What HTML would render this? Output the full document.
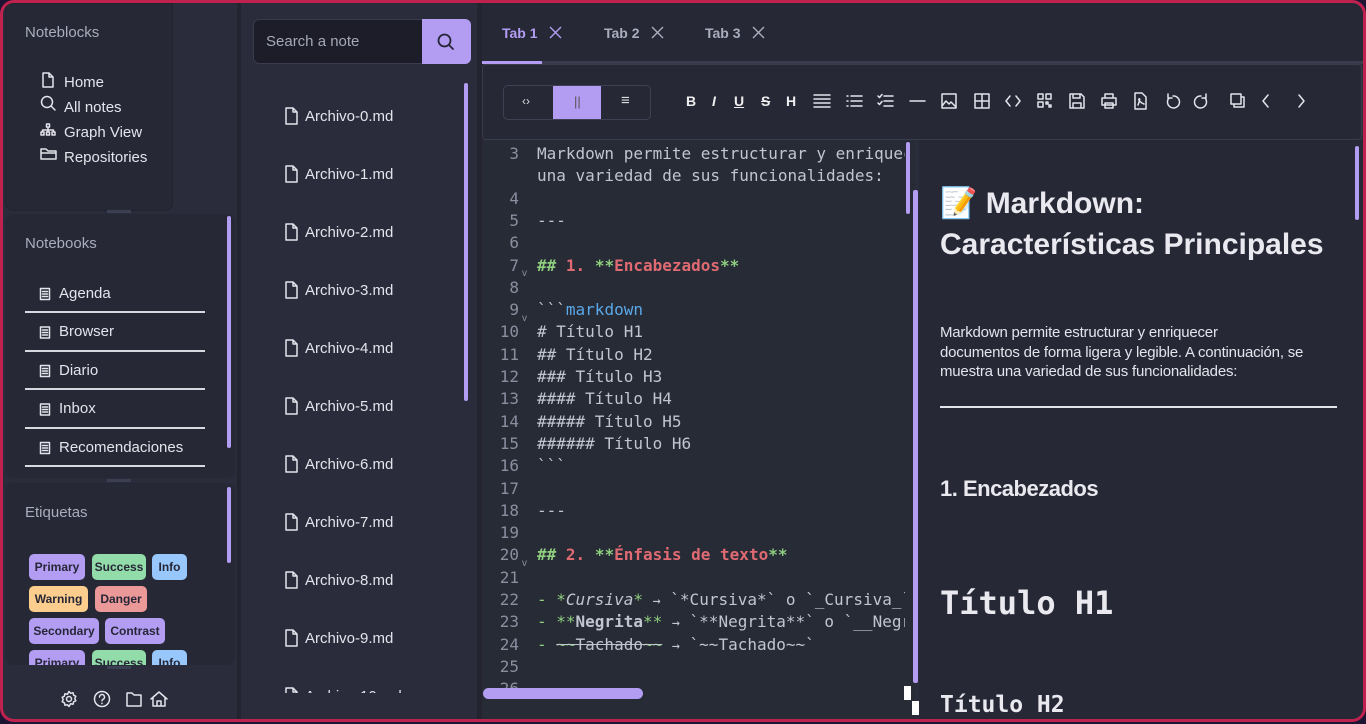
<!DOCTYPE html>
<html><head><meta charset="utf-8"><style>
*{box-sizing:border-box;margin:0;padding:0}
body{width:1366px;height:724px;background:#1c1432;overflow:hidden;font-family:"Liberation Sans",sans-serif;position:relative}
.a{position:absolute}
#win{left:0;top:0;width:1366px;height:722px;background:#2a2c3b;border:3px solid #c0224f;border-radius:14px;overflow:hidden}
.pan{background:#272836}
.t{color:#e4e4ec;font-size:15px;white-space:nowrap}
.hd{color:#a9adbd;font-size:15px}
.ic{stroke:#e4e4ec;fill:none;stroke-width:1.5;stroke-linecap:round;stroke-linejoin:round}
.tag{position:absolute;height:26px;border-radius:5px;font-size:12px;font-weight:bold;color:#262637;line-height:26px;text-align:center}
.code{font-family:"DejaVu Sans Mono","Liberation Mono",monospace;font-size:16px;color:#c1c5d0;white-space:pre;line-height:22.3px}
.ln{position:absolute;left:0;width:37px;text-align:right;color:#8a8fa0}
.cl{position:absolute;left:55px}
.g{color:#8fce7e}.r{color:#e06a72;font-weight:bold}.b{color:#5aa8e8}
.tb{position:absolute;top:90px;color:#eee;font-size:14px;font-weight:bold}
.tab{position:absolute;top:22px;font-size:14px;font-weight:bold}
</style></head><body>
<div id="win" class="a">
<!-- left sidebar -->
<div class="a" style="left:2px;top:0;width:230px;height:206px;background:#2a2c3b"></div>
<div class="a pan" style="left:2px;top:0;width:168px;height:208px;border-radius:0 0 8px 8px;border:1px solid #22232f"></div>
<div class="a" style="left:104px;top:207px;width:24px;height:3px;background:#3c3f52"></div>
<div class="a hd" style="left:22px;top:21px">Noteblocks</div>
<svg class="a" style="left:36px;top:68px" width="20" height="100" viewBox="0 0 20 100">
<path class="ic" d="M4 2h6l4 4v10H4z M10 2v4h4"/>
<circle class="ic" cx="8" cy="31" r="5.5"/><path class="ic" d="M12 35l4 4"/>
<path class="ic" d="M7.5 53h3v3h-3z M2 61h3v3H2z M7.5 61h3v3h-3z M13 61h3v3h-3z M9 56v5 M3.5 61v-2h11v2"/>
<path class="ic" d="M2 78h5l2 2h8v8H2z M2 82h15"/>
</svg>
<div class="a t" style="left:61px;top:71px">Home</div>
<div class="a t" style="left:61px;top:96px">All notes</div>
<div class="a t" style="left:61px;top:121px">Graph View</div>
<div class="a t" style="left:61px;top:146px">Repositories</div>

<div class="a pan" style="left:2px;top:211px;width:230px;height:264px;border-radius:8px"></div>
<div class="a" style="left:224px;top:213px;width:4px;height:232px;background:#b39df3;border-radius:2px"></div>
<div class="a hd" style="left:22px;top:232px">Notebooks</div>
<div class="a" style="left:22px;top:270px;width:180px">
<svg class="a" style="left:14px;top:14px" width="12" height="170" viewBox="0 0 12 170">
<g id="nb"><path class="ic" stroke-width="1.2" d="M1.5 1.5h9v11h-9z M3.5 4.5h5M3.5 7h5M3.5 9.5h5"/></g>
<use href="#nb" y="38.5"/><use href="#nb" y="77"/><use href="#nb" y="115.5"/><use href="#nb" y="154"/>
</svg>
<div class="a t" style="top:12px;left:34px">Agenda</div><div class="a" style="top:38px;width:180px;height:2px;background:#d8d8e0"></div>
<div class="a t" style="top:50px;left:34px">Browser</div><div class="a" style="top:77px;width:180px;height:2px;background:#d8d8e0"></div>
<div class="a t" style="top:89px;left:34px">Diario</div><div class="a" style="top:115px;width:180px;height:2px;background:#d8d8e0"></div>
<div class="a t" style="top:127px;left:34px">Inbox</div><div class="a" style="top:154px;width:180px;height:2px;background:#d8d8e0"></div>
<div class="a t" style="top:166px;left:34px">Recomendaciones</div><div class="a" style="top:192px;width:180px;height:2px;background:#d8d8e0"></div>
</div>
<div class="a" style="left:104px;top:476px;width:24px;height:3px;background:#3c3f52"></div>

<div class="a pan" style="left:2px;top:480px;width:230px;height:182px;border-radius:8px;overflow:hidden">
<div class="a" style="left:222px;top:4px;width:4px;height:76px;background:#b39df3;border-radius:2px"></div>
<div class="a hd" style="left:20px;top:21px">Etiquetas</div>
<div class="tag" style="left:24px;top:71px;width:56px;background:#b39df3">Primary</div>
<div class="tag" style="left:87px;top:71px;width:54px;background:#91dca8">Success</div>
<div class="tag" style="left:147px;top:71px;width:35px;background:#98c8fb">Info</div>
<div class="tag" style="left:24px;top:103px;width:59px;background:#fccd8c">Warning</div>
<div class="tag" style="left:90px;top:103px;width:52px;background:#ea9898">Danger</div>
<div class="tag" style="left:24px;top:135px;width:70px;background:#b39df3">Secondary</div>
<div class="tag" style="left:100px;top:135px;width:60px;background:#b39df3">Contrast</div>
<div class="tag" style="left:24px;top:167px;width:56px;background:#b39df3">Primary</div>
<div class="tag" style="left:87px;top:167px;width:54px;background:#91dca8">Success</div>
<div class="tag" style="left:147px;top:167px;width:35px;background:#98c8fb">Info</div>
</div>
<div class="a" style="left:104px;top:663px;width:24px;height:3px;background:#3c3f52"></div>
<svg class="a" style="left:56px;top:685px" width="120" height="22" viewBox="0 0 120 22">
<circle class="ic" cx="10" cy="11" r="2.5"/><path class="ic" d="M10 3.5l1.6 1.8 2.4-.6.6 2.4 2.2 1.2-1 2.2 1 2.2-2.2 1.2-.6 2.4-2.4-.6L10 18.5l-1.6-1.8-2.4.6-.6-2.4-2.2-1.2 1-2.2-1-2.2 2.2-1.2.6-2.4 2.4.6z"/>
<circle class="ic" cx="43" cy="11" r="7.5"/><path class="ic" d="M40.5 9a2.5 2.5 0 1 1 3.3 2.4c-.6.3-.8.7-.8 1.4 M43 15.3v.2"/>
<path class="ic" d="M68 5h5l2 2h7v11H68z"/>
<path class="ic" d="M92 11l8-7 8 7 M94 10v8h12v-8 M98 18v-5h4v5"/>
</svg>

<!-- notes column -->
<div class="a" style="left:234px;top:0;width:4px;height:720px;background:#23242f"></div>
<div class="a" style="left:250px;top:16px;width:218px;height:45px;background:#1c1d28;border:1px solid #3a3c4e;border-radius:6px"></div>
<div class="a" style="left:419px;top:16px;width:49px;height:45px;background:#b39df3;border-radius:0 6px 6px 0"></div>
<svg class="a" style="left:433px;top:29px" width="20" height="20"><circle cx="8.5" cy="8.5" r="6" fill="none" stroke="#262637" stroke-width="1.8"/><path d="M13 13l4 4" stroke="#262637" stroke-width="1.8" stroke-linecap="round"/></svg>
<div class="a" style="left:263px;top:30px;color:#a5a8b8;font-size:15px">Search a note</div>
<div class="a" style="left:461px;top:80px;width:4px;height:318px;background:#b39df3;border-radius:2px"></div>
<div class="a" style="left:238px;top:70px;width:230px;height:620px;overflow:hidden">
<div style="position:relative;top:-70px">
<svg class="a" style="left:43px;top:104px" width="16" height="600">
<g id="f"><path class="ic" d="M2 1h7l4 4v12H2z M9 1v4h4"/></g>
<use href="#f" y="58"/><use href="#f" y="116"/><use href="#f" y="174"/><use href="#f" y="232"/><use href="#f" y="290"/><use href="#f" y="348"/><use href="#f" y="406"/><use href="#f" y="464"/><use href="#f" y="522"/><use href="#f" y="580"/>
</svg>
<div class="a t" style="left:64px;top:105px">Archivo-0.md</div>
<div class="a t" style="left:64px;top:163px">Archivo-1.md</div>
<div class="a t" style="left:64px;top:221px">Archivo-2.md</div>
<div class="a t" style="left:64px;top:279px">Archivo-3.md</div>
<div class="a t" style="left:64px;top:337px">Archivo-4.md</div>
<div class="a t" style="left:64px;top:395px">Archivo-5.md</div>
<div class="a t" style="left:64px;top:453px">Archivo-6.md</div>
<div class="a t" style="left:64px;top:511px">Archivo-7.md</div>
<div class="a t" style="left:64px;top:569px">Archivo-8.md</div>
<div class="a t" style="left:64px;top:627px">Archivo-9.md</div>
<div class="a t" style="left:64px;top:685px">Archivo-10.md</div>
</div></div>

<!-- editor area -->
<div class="a" style="left:474px;top:0;width:6px;height:720px;background:#23242f"></div>
<div class="a pan" style="left:479px;top:0;width:884px;height:58px"></div>
<div class="tab" style="left:499px;color:#b39df3">Tab 1</div>
<div class="tab" style="left:601px;color:#a9adbd">Tab 2</div>
<div class="tab" style="left:702px;color:#a9adbd">Tab 3</div>
<svg class="a" style="left:546px;top:23px" width="230" height="14">
<path d="M1 1l11 11M12 1L1 12" stroke="#b39df3" stroke-width="1.4"/>
<path d="M103 1l11 11M114 1l-11 11M204 1l11 11M215 1l-11 11" stroke="#a9adbd" stroke-width="1.4"/>
</svg>
<div class="a" style="left:479px;top:58px;width:884px;height:3px;background:#3a3c4e"></div>
<div class="a" style="left:479px;top:58px;width:60px;height:3px;background:#b39df3"></div>
<div class="a pan" style="left:479px;top:61px;width:880px;height:76px;border:1px solid #3a3c4e;border-radius:4px"></div>
<div class="a" style="left:500px;top:82px;width:148px;height:35px;border:1px solid #3e4053;border-radius:5px;overflow:hidden">
<div class="a" style="left:49px;top:0;width:48px;height:35px;background:#b39df3"></div>
<div class="a" style="left:18px;top:8px;color:#ddd;font-size:12px">‹›</div>
<div class="a" style="left:70px;top:8px;color:#555;font-size:13px">||</div>
<div class="a" style="left:117px;top:6px;color:#ddd;font-size:15px">≡</div>
</div>
<div class="tb" style="left:683px">B</div>
<div class="tb" style="left:709px;font-style:italic">I</div>
<div class="tb" style="left:731px;text-decoration:underline">U</div>
<div class="tb" style="left:758px;text-decoration:line-through">S</div>
<div class="tb" style="left:783px">H</div>
<svg class="a" style="left:808px;top:87px" width="510" height="22" viewBox="0 0 510 22">
<g class="ic" stroke-width="1.6">
<path d="M3 5h16M3 9h16M3 13h16M3 17h16"/>
<path d="M36 6h1M36 11h1M36 16h1M40 6h11M40 11h11M40 16h11"/>
<path d="M67 6l1.5 1.5 2.5-3M67 13l1.5 1.5 2.5-3M73 6h9M73 11h9M73 16h9"/>
<path d="M99 11h15"/>
<path d="M131 4h14v14h-14z M131 16l4-5 3 3 2-2 5 5"/>
<path d="M164 4h14v14h-14z M171 4v14 M164 11h14"/>
<path d="M199 6l-4 5 4 5 M205 6l4 5-4 5"/>
<path d="M227 4h5v5h-5z M235 4h5v5h-5z M227 12h5v5h-5z M235 12h2v2h-2z M238 15h2v2h-2z"/>
<path d="M259 4h11l3 3v11h-14z M262 4v4h7v-4 M262 18v-5h8v5"/>
<path d="M294 8V4h8v4 M291 8h14v7h-14z M294 13h8v5h-8z"/>
<path d="M324 3h7l4 4v12h-11z M327 15c2-5 2-7 1-6s2 4 5 5"/>
<path d="M362 6a6 6 0 1 1-4 2 M357 4v4h4"/>
<path d="M390 6a6 6 0 1 0 4 2 M395 4v4h-4"/>
<path d="M420 4h10v10h-10z M423 14v3h10V7h-3"/>
<path d="M457 5l-5 6 5 6"/>
<path d="M488 5l5 6-5 6"/>
</g></svg>

<!-- code pane -->
<div class="a" style="left:479px;top:137px;width:433px;height:548px;background:#272b36"></div>
<div class="a" style="left:479px;top:137px;width:423px;height:548px;overflow:hidden">
<div class="a code" style="left:0;top:3px;width:426px">
<span class="ln" style="top:0">3</span><span class="cl" style="top:0">Markdown permite estructurar y enriquecer</span><span class="cl" style="top:22.3px">una variedad de sus funcionalidades:</span>
<span class="ln" style="top:44.6px">4</span>
<span class="ln" style="top:66.9px">5</span><span class="cl" style="top:66.9px">---</span>
<span class="ln" style="top:89.2px">6</span>
<span class="ln" style="top:111.5px">7</span><span class="cl" style="top:111.5px"><b class="g">## </b><b class="r">1. </b><b class="g">**</b><b class="r">Encabezados</b><b class="g">**</b></span>
<span class="ln" style="top:133.8px">8</span>
<span class="ln" style="top:156.1px">9</span><span class="cl" style="top:156.1px">&#96;&#96;&#96;<span class="b">markdown</span></span>
<span class="ln" style="top:178.4px">10</span><span class="cl" style="top:178.4px"># Título H1</span>
<span class="ln" style="top:200.7px">11</span><span class="cl" style="top:200.7px">## Título H2</span>
<span class="ln" style="top:223px">12</span><span class="cl" style="top:223px">### Título H3</span>
<span class="ln" style="top:245.3px">13</span><span class="cl" style="top:245.3px">#### Título H4</span>
<span class="ln" style="top:267.6px">14</span><span class="cl" style="top:267.6px">##### Título H5</span>
<span class="ln" style="top:289.9px">15</span><span class="cl" style="top:289.9px">###### Título H6</span>
<span class="ln" style="top:312.2px">16</span><span class="cl" style="top:312.2px">&#96;&#96;&#96;</span>
<span class="ln" style="top:334.5px">17</span>
<span class="ln" style="top:356.8px">18</span><span class="cl" style="top:356.8px">---</span>
<span class="ln" style="top:379.1px">19</span>
<span class="ln" style="top:401.4px">20</span><span class="cl" style="top:401.4px"><b class="g">## </b><b class="r">2. </b><b class="g">**</b><b class="r">Énfasis de texto</b><b class="g">**</b></span>
<span class="ln" style="top:423.7px">21</span>
<span class="ln" style="top:446px">22</span><span class="cl" style="top:446px"><span class="g">- *</span><i>Cursiva</i><span class="g">*</span> <small>→</small> &#96;*Cursiva*&#96; o &#96;_Cursiva_&#96;</span>
<span class="ln" style="top:468.3px">23</span><span class="cl" style="top:468.3px"><span class="g">- **</span><b>Negrita</b><span class="g">**</span> <small>→</small> &#96;**Negrita**&#96; o &#96;__Negrita__&#96;</span>
<span class="ln" style="top:490.6px">24</span><span class="cl" style="top:490.6px"><span class="g">- </span><s><span class="g">~~</span>Tachado<span class="g">~~</span></s> <small>→</small> &#96;~~Tachado~~&#96;</span>
<span class="ln" style="top:512.9px">25</span>
<span class="ln" style="top:535.2px">26</span>
</div>
<div class="a" style="left:40px;top:128px;color:#8a8fa0;font-size:10px">v</div>
<div class="a" style="left:40px;top:173px;color:#8a8fa0;font-size:10px">v</div>
<div class="a" style="left:40px;top:418px;color:#8a8fa0;font-size:10px">v</div>
</div>
<div class="a" style="left:903px;top:139px;width:4px;height:72px;background:#b39df3;border-radius:2px"></div>
<div class="a" style="left:479px;top:685px;width:433px;height:35px;background:#272b36"></div>
<div class="a" style="left:480px;top:685px;width:160px;height:11px;background:#b39df3;border-radius:6px"></div>
<div class="a" style="left:910px;top:187px;width:5px;height:493px;background:#b39df3;border-radius:2px"></div>
<div class="a" style="left:901px;top:683px;width:7px;height:14px;background:#fff"></div>
<div class="a" style="left:909px;top:698px;width:7px;height:14px;background:#fff"></div>

<!-- preview -->
<div class="a pan" style="left:916px;top:137px;width:446px;height:583px;overflow:hidden">
<div class="a" style="left:436px;top:6px;width:4px;height:74px;background:#b39df3;border-radius:2px"></div>
<div class="a" style="left:21px;top:43px;color:#e9e9ef;font-size:30px;font-weight:bold;line-height:41px;width:420px;white-space:nowrap">📝 Markdown:<br>Características Principales</div>
<div class="a" style="left:21px;top:183px;color:#e4e4ec;font-size:15px;line-height:19.5px;white-space:nowrap;letter-spacing:-0.2px">Markdown permite estructurar y enriquecer<br>documentos de forma ligera y legible. A continuación, se<br>muestra una variedad de sus funcionalidades:</div>
<div class="a" style="left:21px;top:266px;width:397px;height:2px;background:#e4e4ec"></div>
<div class="a" style="left:21px;top:336px;color:#e9e9ef;font-size:22px;font-weight:bold;letter-spacing:-0.5px">1. Encabezados</div>
<div class="a" style="left:21px;top:444px;color:#e9e9ef;font-size:32px;font-weight:bold;font-family:'DejaVu Sans Mono',monospace">Título H1</div>
<div class="a" style="left:21px;top:552px;color:#e9e9ef;font-size:23px;font-weight:bold;font-family:'DejaVu Sans Mono',monospace">Título H2</div>
</div>
</div>
</body></html>
